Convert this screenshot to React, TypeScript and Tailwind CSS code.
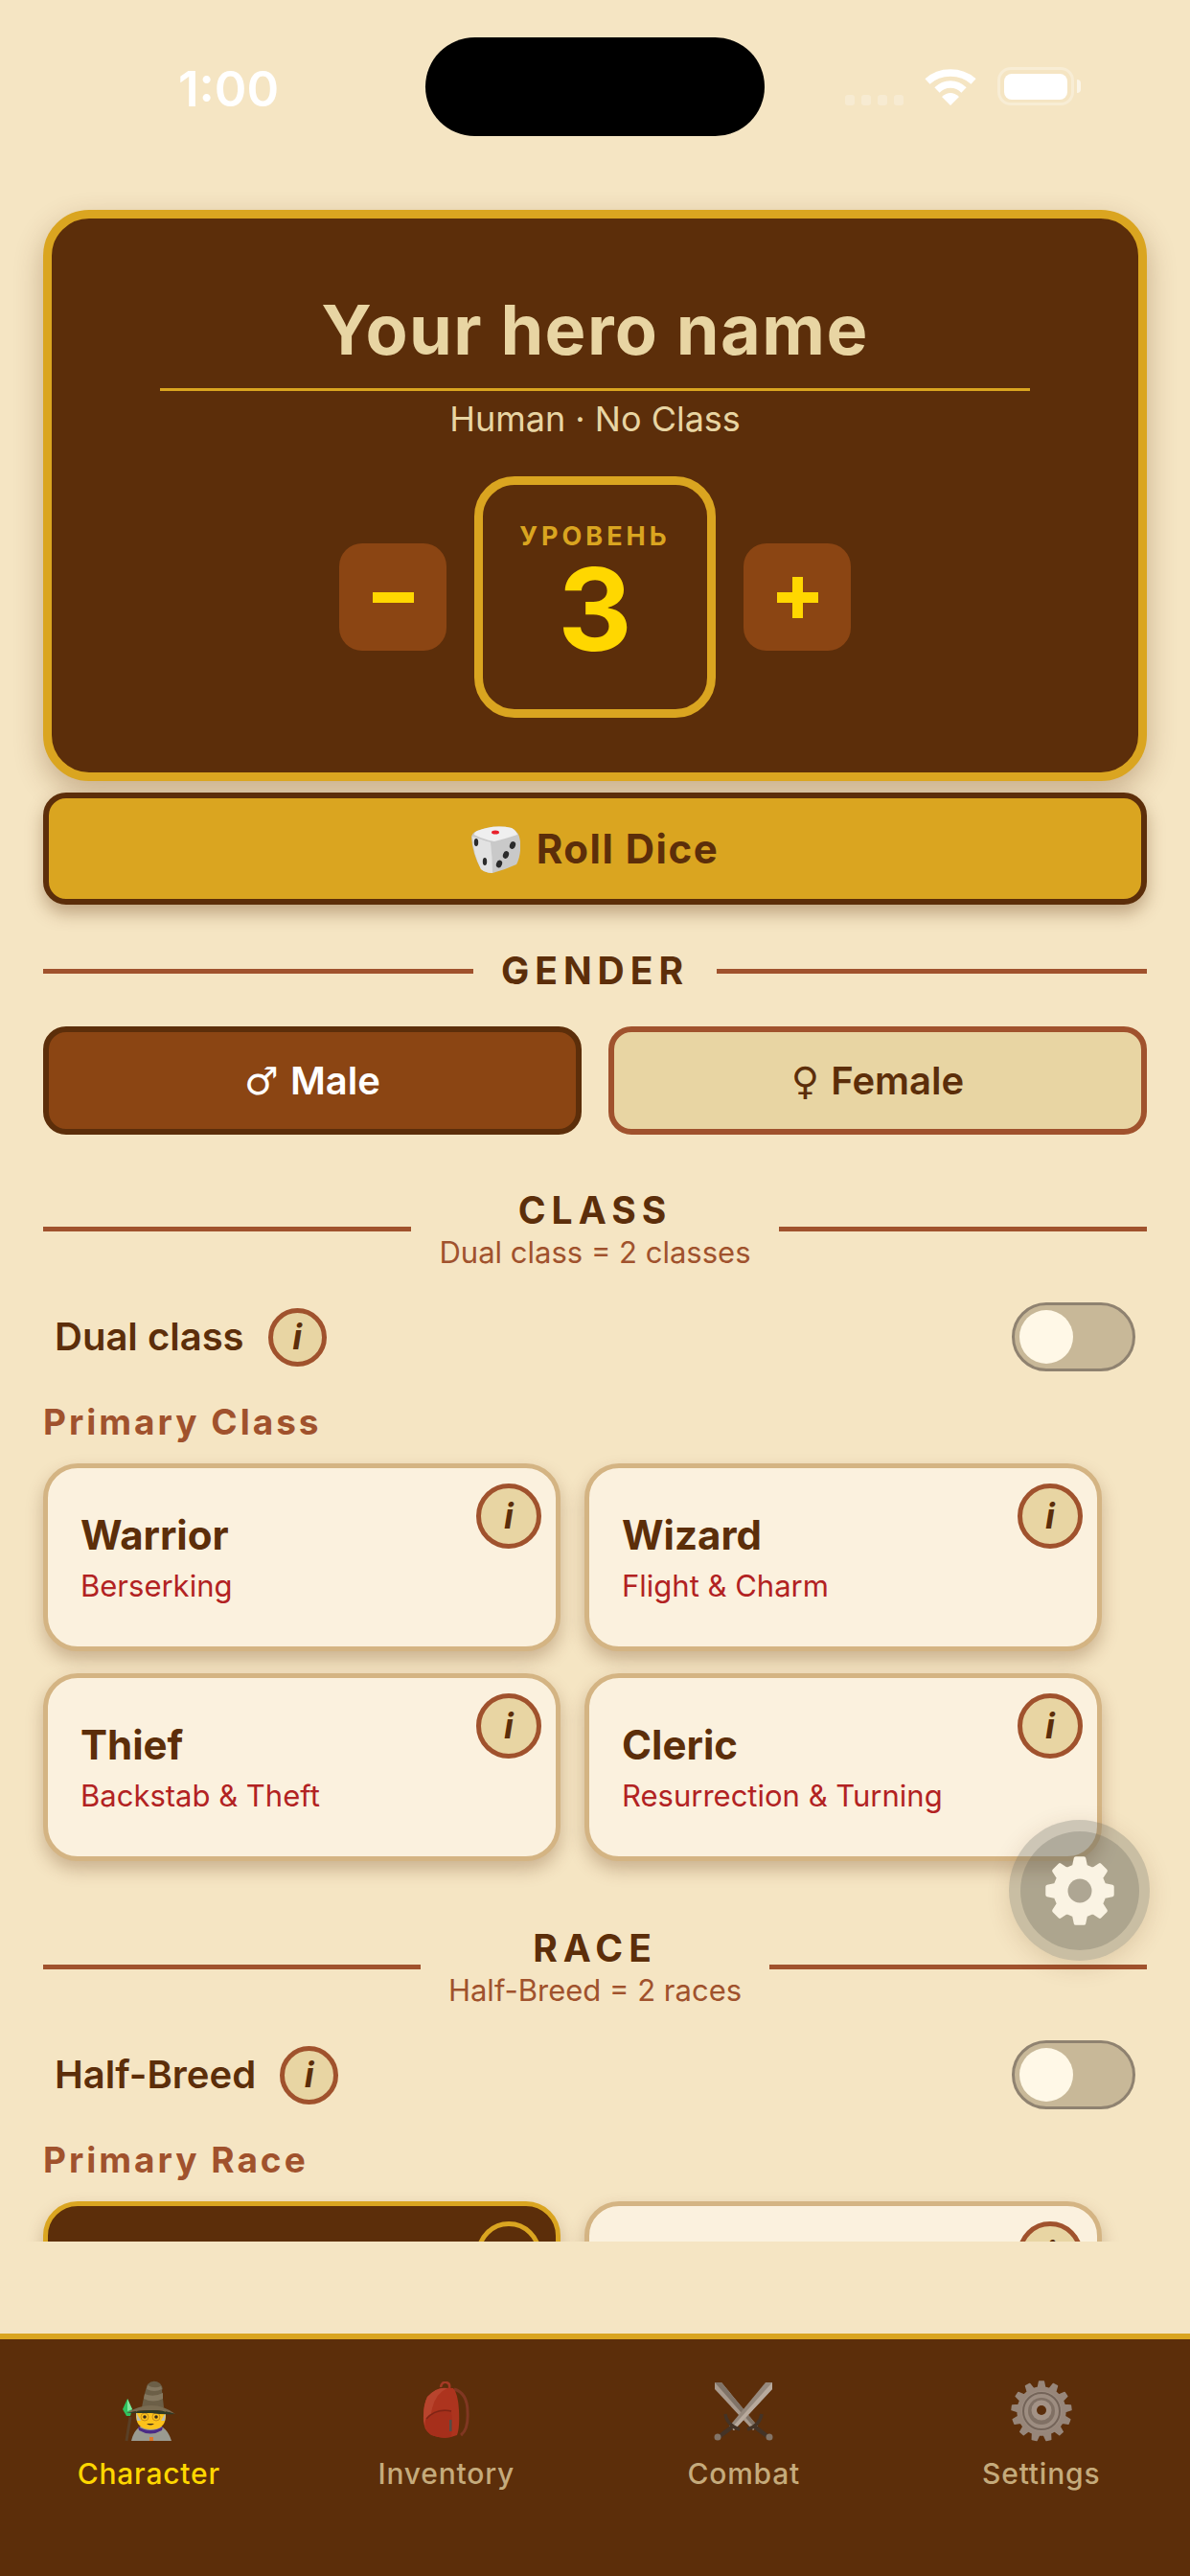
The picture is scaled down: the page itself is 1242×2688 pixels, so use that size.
import type { ReactNode } from "react";

const FONT = "font-['Inter','Liberation_Sans',sans-serif]";

// builds a toothed wheel outline, used by the two gear icons
function gearPath(cx: number, cy: number, teeth: number, outer: number, root: number, hole: number) {
  const pts: string[] = [];
  const step = (Math.PI * 2) / teeth;
  for (let i = 0; i < teeth; i++) {
    const a = -Math.PI / 2 + i * step;
    const list: [number, number][] = [
      [a - step * 0.3, root],
      [a - step * 0.16, outer],
      [a + step * 0.16, outer],
      [a + step * 0.3, root],
    ];
    list.forEach(([ang, r]) => {
      pts.push(`${(cx + Math.cos(ang) * r).toFixed(2)} ${(cy + Math.sin(ang) * r).toFixed(2)}`);
    });
  }
  const ring = `M${cx - hole} ${cy}a${hole} ${hole} 0 1 0 ${hole * 2} 0a${hole} ${hole} 0 1 0 ${-hole * 2} 0Z`;
  return `M${pts.join("L")}Z${ring}`;
}

function Wifi() {
  return (
    <svg viewBox="0 0 54 40" className="h-[40px] w-[54px]" fill="none">
      <path d="M3 15C16 3 38 3 51 15" stroke="#fff" strokeWidth="7.5" />
      <path d="M13 24C21 16 33 16 41 24" stroke="#fff" strokeWidth="7.5" />
      <path d="M18 31Q27 23 36 31L27 40Z" fill="#fff" />
    </svg>
  );
}

function Battery() {
  return (
    <div className="flex items-center">
      <div className="flex h-[40px] w-[80px] items-center justify-center rounded-[14px] border-[3px] border-white/30">
        <div className="h-[27px] w-[66px] rounded-[8px] bg-white" />
      </div>
      <div className="ml-[3px] h-[14px] w-[4px] rounded-r-full bg-white/60" />
    </div>
  );
}

function StatusBar() {
  return (
    <div className="flex h-[219px] items-start pl-[186px] pt-[39px]">
      <div className="flex h-[103px] w-[258px] items-center pt-[6px] text-[51px] font-semibold text-white">1:00</div>
      <div className="h-[103px] w-[354px] rounded-full bg-black" />
      <div className="ml-[84px] mt-[31px] flex h-[40px] items-end gap-[7px]">
        {[0, 1, 2, 3].map((d) => (
          <div key={d} className="h-[11px] w-[10px] rounded-[3px] bg-white/25" />
        ))}
      </div>
      <div className="ml-[22px] mt-[31px]">
        <Wifi />
      </div>
      <div className="ml-[22px] mt-[31px]">
        <Battery />
      </div>
    </div>
  );
}

function Die() {
  return (
    <svg viewBox="0 0 51 50" className="h-[50px] w-[51px]">
      <path d="M6 6Q24 -1 42 3Q50 7 51 17Q52 32 47 41Q34 47 22 50Q14 50 10 46Q1 30 0 12Q1 8 6 6Z" fill="#c9c9c9" />
      <path d="M6 6Q24 -1 42 3Q47 6 48 10Q36 14 24 17Q12 15 3 10Q3 7 6 6Z" fill="#efefef" />
      <path d="M1 12Q10 15 20 18Q22 34 22 50Q14 50 10 46Q2 30 1 12Z" fill="#e2e2e2" />
      <ellipse cx="25" cy="7.5" rx="4" ry="2" fill="#e8212b" />
      <ellipse cx="5" cy="18" rx="2.2" ry="4" fill="#2b2b2b" />
      <ellipse cx="14" cy="38" rx="2.2" ry="4" fill="#2b2b2b" />
      <ellipse cx="43" cy="21" rx="3" ry="4" fill="#2b2b2b" transform="rotate(20 43 21)" />
      <ellipse cx="36" cy="31" rx="3" ry="4" fill="#2b2b2b" transform="rotate(20 36 31)" />
      <ellipse cx="29" cy="40.5" rx="3" ry="4" fill="#2b2b2b" transform="rotate(20 29 40.5)" />
    </svg>
  );
}

function Mage() {
  return (
    <svg viewBox="0 0 56 64" className="h-[64px] w-[56px]">
      <path d="M10 63Q13 50 22 47H39Q48 50 52 63Z" fill="#9a9a90" />
      <path d="M17 48Q30 56 43 48L42 52Q30 59 18 52Z" fill="#4b2a86" />
      <rect x="29" y="59" width="4" height="4" fill="#e0762a" />
      <path d="M5 63L9 38" stroke="#5a3f25" strokeWidth="3" />
      <path d="M5 37L1 30L6 19L11 30L9 37Z" fill="#2fc25e" />
      <path d="M6 19L11 30L6 32Z" fill="#7fe79d" />
      <path d="M15 32H46V38Q45 51 31 51Q16 51 15 38Z" fill="#fcc21b" />
      <path d="M15 33L20 42L16 42ZM46 33L41 42L45 42Z" fill="#b9bdb8" />
      <circle cx="24" cy="38" r="4" fill="none" stroke="#c98f1a" strokeWidth="1" />
      <circle cx="36" cy="38" r="4" fill="none" stroke="#c98f1a" strokeWidth="1" />
      <circle cx="24" cy="38" r="1.8" fill="#3a2a1a" />
      <circle cx="36" cy="38" r="1.8" fill="#3a2a1a" />
      <path d="M26 45Q30 48 34 45Z" fill="#3a2a1a" />
      <path d="M21 28Q24 12 27 4Q33 -2 40 3Q44 8 42 10L44 28Z" fill="#6c5f47" />
      <path d="M24 14Q33 18 43 13L43 19Q33 24 23 19ZM27 5Q34 9 41 6L42 9Q34 13 26 9Z" fill="#857860" />
      <path d="M5 34Q18 26 31 26Q44 26 56 35Q44 31 31 31Q16 31 5 34Z" fill="#7a6c52" />
      <path d="M5 34Q18 31 31 31Q44 31 56 35Q44 36 31 34Q16 34 5 34Z" fill="#2e3a26" />
    </svg>
  );
}

function Backpack() {
  return (
    <svg viewBox="0 0 50 62" className="h-[62px] w-[50px]">
      <path d="M33 8Q47 12 47 32Q48 50 40 56" fill="none" stroke="#8a3a28" strokeWidth="3" />
      <path d="M19 6Q20 0 25 1Q29 2 28 7" fill="none" stroke="#b83d2c" strokeWidth="2.5" />
      <path d="M5 16Q15 5 32 7Q37 12 38 30Q39 48 36 56Q22 62 8 55Q0 50 1 36Q1 24 5 16Z" fill="#c23624" />
      <path d="M5 16Q15 5 26 7Q14 12 10 28Q7 40 8 50Q0 46 1 36Q1 24 5 16Z" fill="#d04a36" />
      <path d="M3 40Q13 26 30 30Q32 44 30 58Q20 60 9 56Q1 50 3 40Z" fill="#b93020" />
      <path d="M4 39Q14 28 30 31" fill="none" stroke="#8a2318" strokeWidth="1.5" />
      <rect x="28" y="40" width="2.5" height="12" fill="#555" />
    </svg>
  );
}

function Swords() {
  return (
    <svg viewBox="0 0 62 62" className="h-[62px] w-[62px]">
      <path d="M1 1L8 1L46 47L41 51L1 8Z" fill="#bdb6ae" />
      <path d="M1 1L8 1L46 47L43 49Z" fill="#8a857f" />
      <path d="M61 1L54 1L16 47L21 51L61 8Z" fill="#a5a09a" />
      <path d="M61 1L61 8L21 51L18 49Z" fill="#cfc9c2" />
      <path d="M12 34Q14 46 27 50" fill="none" stroke="#3f352d" strokeWidth="3.5" />
      <path d="M50 34Q48 46 35 50" fill="none" stroke="#3f352d" strokeWidth="3.5" />
      <path d="M21 46L5 58" stroke="#3f352d" strokeWidth="4.5" />
      <path d="M41 46L57 58" stroke="#3f352d" strokeWidth="4.5" />
      <circle cx="4" cy="58" r="3.5" fill="#8d867f" />
      <circle cx="58" cy="58" r="3.5" fill="#8d867f" />
    </svg>
  );
}

function BigGear() {
  return (
    <svg viewBox="0 0 64 64" className="h-[64px] w-[64px]">
      <path d={gearPath(32, 32, 13, 31, 25, 0)} fill="#a69d97" stroke="#a69d97" strokeWidth="1.5" strokeLinejoin="round" />
      <circle cx="32" cy="32" r="21" fill="#aea59f" />
      <circle cx="32" cy="32" r="19" fill="none" stroke="#7a726d" strokeWidth="2" />
      <circle cx="32" cy="32" r="14" fill="#8a817b" />
      <circle cx="32" cy="31" r="10.5" fill="#b5aca6" />
      <circle cx="32" cy="31" r="5" fill="#5a2d0c" />
    </svg>
  );
}

function FabGear() {
  return (
    <svg viewBox="0 0 74 74" className="h-[74px] w-[74px]">
      <path
        fillRule="evenodd"
        d={gearPath(37, 37, 8, 34, 26, 12.5)}
        fill="#faf3e3"
        stroke="#faf3e3"
        strokeWidth="4"
        strokeLinejoin="round"
      />
      <circle cx="37" cy="37" r="12.5" fill="#aea693" />
    </svg>
  );
}

function InfoDot({ size = "small", dark = false }: { size?: "small" | "big"; dark?: boolean }) {
  const dim = size === "big" ? "h-[68px] w-[68px]" : "h-[61px] w-[61px]";
  const tone = dark ? "border-[#DAA520] bg-[#5C2E0A]" : "border-[#A0522D] bg-[#E8D5A3]";
  return (
    <div className={`flex shrink-0 items-center justify-center rounded-full border-[5px] ${dim} ${tone}`}>
      <span className="text-[36px] font-bold italic leading-none text-[#5C2E0A]">i</span>
    </div>
  );
}

function Heading({ title, sub }: { title: string; sub?: string }) {
  return (
    <div className="flex items-center">
      <div className="h-[5px] flex-1 bg-[#A0522D]" />
      <div className="flex flex-col items-center px-[29px]">
        <div className="text-[39px] font-bold leading-[50px] tracking-[6px] text-[#5C2E0A]">{title}</div>
        {sub && <div className="text-[31px] leading-[38px] text-[#A0522D]">{sub}</div>}
      </div>
      <div className="h-[5px] flex-1 bg-[#A0522D]" />
    </div>
  );
}

function ToggleRow({ label }: { label: string }) {
  return (
    <div className="mt-[33px] flex h-[72px] items-center justify-between pl-[12px] pr-[12px]">
      <div className="flex items-center gap-[25px]">
        <span className="text-[40px] font-semibold text-[#5C2E0A]">{label}</span>
        <InfoDot />
      </div>
      <div className="flex h-[72px] w-[129px] items-center rounded-full border-[3px] border-[#8F8270] bg-[#C8B898] pl-[5px]">
        <div className="h-[56px] w-[56px] rounded-full bg-[#FFF8E7]" />
      </div>
    </div>
  );
}

function SubLabel({ children }: { children: ReactNode }) {
  return <div className="mt-[28px] text-[37px] font-bold leading-[50px] tracking-[3px] text-[#A0522D]">{children}</div>;
}

function OptionCard({ name, note, picked = false }: { name: string; note?: string; picked?: boolean }) {
  const tone = picked ? "border-[#DAA520] bg-[#5C2E0A]" : "border-[#D4B483] bg-[#FBF1DE]";
  return (
    <div className={`relative h-[196px] w-[540px] rounded-[36px] border-[5px] pl-[34px] pt-[43px] shadow-[0_9px_18px_rgba(92,46,10,0.28)] ${tone}`}>
      <div className="absolute right-[15px] top-[16px]">
        <InfoDot size="big" dark={picked} />
      </div>
      <div className="text-[42px] font-bold leading-[54px] text-[#5C2E0A]">{name}</div>
      {note && <div className="mt-[7px] text-[31px] leading-[38px] text-[#B22222]">{note}</div>}
    </div>
  );
}

const TABS = [
  { label: "Character", icon: <Mage />, active: true },
  { label: "Inventory", icon: <Backpack />, active: false },
  { label: "Combat", icon: <Swords />, active: false },
  { label: "Settings", icon: <BigGear />, active: false },
];

export default function App() {
  return (
    <div className={`relative h-[2688px] w-[1242px] overflow-hidden bg-[#F5E5C3] ${FONT}`}>
      <div className="h-[2339px] overflow-hidden">
        <StatusBar />
        <div className="px-[45px]">
          {/* Hero card */}
          <div className="flex h-[596px] flex-col items-center rounded-[48px] border-[9px] border-[#DAA520] bg-[#5C2E0A] pt-[73px] shadow-[0_12px_30px_rgba(92,46,10,0.3)]">
            <div className="w-[908px] border-b-[3px] border-[#DAA520] pb-[18px] text-center text-[72px] font-bold leading-[86px] tracking-[1.4px] text-[#E8D5A3]">
              Your hero name
            </div>
            <div className="mt-[7px] text-[36px] leading-[44px] text-[#E8D5A3]">Human · No Class</div>
            <div className="mt-[38px] flex items-center gap-[29px]">
              <button className="flex h-[112px] w-[112px] items-center justify-center rounded-[24px] bg-[#8B4513]">
                <span className="h-[11px] w-[43px] bg-[#FFD700]" />
              </button>
              <div className="flex h-[252px] w-[252px] flex-col items-center rounded-[42px] border-[9px] border-[#DAA520] pt-[36px]">
                <div className="text-[27px] font-bold leading-[36px] tracking-[4px] text-[#DAA520]">УРОВЕНЬ</div>
                <div className="mt-[6px] text-[120px] font-bold leading-[104px] text-[#FFD700]">3</div>
              </div>
              <button className="relative flex h-[112px] w-[112px] items-center justify-center rounded-[24px] bg-[#8B4513]">
                <span className="h-[11px] w-[43px] bg-[#FFD700]" />
                <span className="absolute h-[43px] w-[11px] bg-[#FFD700]" />
              </button>
            </div>
          </div>

          <button className="mt-[12px] flex h-[117px] w-full items-center justify-center gap-[17px] rounded-[24px] border-[6px] border-[#5C2E0A] bg-[#DAA520] shadow-[0_9px_18px_rgba(92,46,10,0.35)]">
            <Die />
            <span className="text-[42px] font-bold tracking-[1.5px] text-[#5C2E0A]">Roll Dice</span>
          </button>

          <div className="mt-[44px]">
            <Heading title="GENDER" />
          </div>
          <div className="mt-[33px] flex gap-[28px]">
            <button className="flex h-[113px] flex-1 items-center justify-center gap-[12px] rounded-[24px] border-[6px] border-[#5C2E0A] bg-[#8B4513] text-[40px] font-semibold text-white">
              <span className="font-['DejaVu_Sans'] font-normal">♂</span>Male
            </button>
            <button className="flex h-[113px] flex-1 items-center justify-center gap-[12px] rounded-[24px] border-[6px] border-[#A0522D] bg-[#E8D5A3] text-[40px] font-semibold text-[#5C2E0A]">
              <span className="font-['DejaVu_Sans'] font-normal">♀</span>Female
            </button>
          </div>

          <div className="mt-[54px]">
            <Heading title="CLASS" sub="Dual class = 2 classes" />
          </div>
          <ToggleRow label="Dual class" />
          <SubLabel>Primary Class</SubLabel>
          <div className="mt-[18px] grid grid-cols-[540px_540px] gap-x-[25px] gap-y-[23px]">
            <OptionCard name="Warrior" note="Berserking" />
            <OptionCard name="Wizard" note="Flight & Charm" />
            <OptionCard name="Thief" note="Backstab & Theft" />
            <OptionCard name="Cleric" note="Resurrection & Turning" />
          </div>

          <div className="mt-[66px]">
            <Heading title="RACE" sub="Half-Breed = 2 races" />
          </div>
          <ToggleRow label="Half-Breed" />
          <SubLabel>Primary Race</SubLabel>
          <div className="mt-[18px] grid grid-cols-[540px_540px] gap-x-[25px] gap-y-[23px]">
            <OptionCard name="" picked />
            <OptionCard name="" />
          </div>
        </div>
      </div>

      {/* Floating settings button */}
      <div className="absolute left-[1053px] top-[1899px] flex h-[147px] w-[147px] items-center justify-center rounded-full bg-[rgba(100,100,90,0.3)] shadow-[0_6px_24px_rgba(92,46,10,0.15)]">
        <div className="flex h-[124px] w-[124px] items-center justify-center rounded-full bg-[rgba(100,100,90,0.28)]">
          <FabGear />
        </div>
      </div>

      {/* Tab bar */}
      <div className="absolute inset-x-0 bottom-0 flex h-[253px] border-t-[6px] border-[#DAA520] bg-[#5C2E0A] pt-[41px]">
        {TABS.map((tab) => (
          <div key={tab.label} className="flex flex-1 flex-col items-center">
            <div className={`flex h-[68px] items-center justify-center ${tab.active ? "" : "opacity-80"}`}>{tab.icon}</div>
            <div className={`mt-[11px] text-[30px] font-medium leading-[40px] tracking-[0.8px] ${tab.active ? "text-[#FFD700]" : "text-[#E8D5A3]/75"}`}>
              {tab.label}
            </div>
          </div>
        ))}
      </div>
    </div>
  );
}
